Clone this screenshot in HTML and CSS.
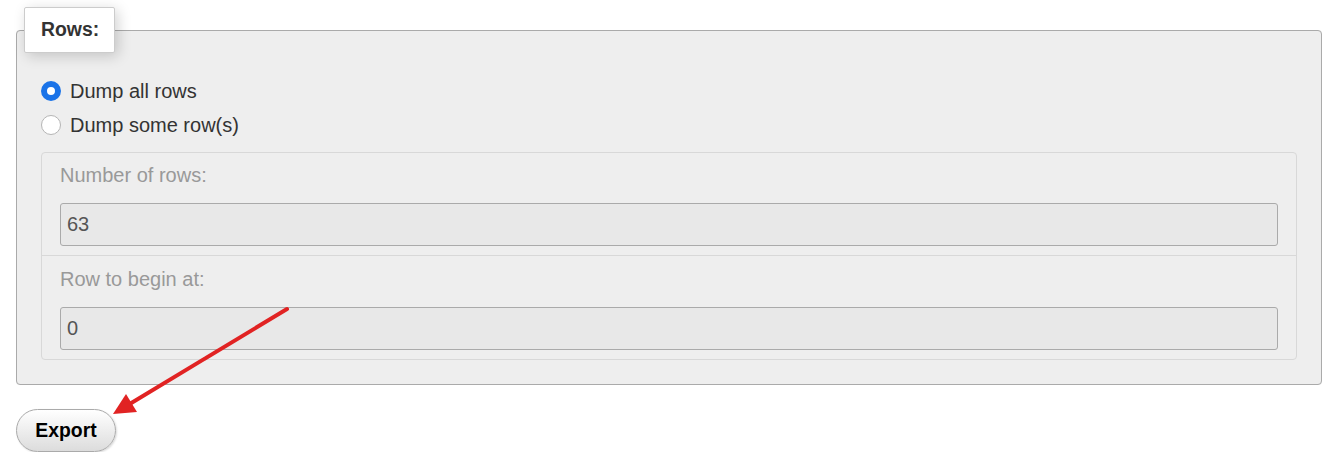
FILE: index.html
```html
<!DOCTYPE html>
<html lang="en">
<head>
    <meta charset="UTF-8">
    <title>Export rows</title>
    <link rel="stylesheet" href="styles.css">
</head>
<body>

<form class="export-form" action="#" method="post">
    <fieldset class="rows-box">
        <legend>Rows:</legend>
        <label class="radio-row">
            <input type="radio" name="allrows" value="1" checked>
            <span class="radio-mark"></span>
            Dump all rows
        </label>
        <label class="radio-row">
            <input type="radio" name="allrows" value="0">
            <span class="radio-mark"></span>
            Dump some row(s)
        </label>
        <div class="rows-options">
            <div class="option-group">
                <label for="limit-to">Number of rows:</label>
                <input type="text" id="limit-to" name="limit_to" value="63" disabled>
            </div>
            <div class="option-group">
                <label for="limit-from">Row to begin at:</label>
                <input type="text" id="limit-from" name="limit_from" value="0" disabled>
            </div>
        </div>
    </fieldset>
    <button type="submit" class="export-btn">Export</button>
</form>

<svg class="pointer-arrow" width="1333" height="463" viewBox="0 0 1333 463">
    <line x1="287" y1="309" x2="128" y2="405" stroke="#e12323" stroke-width="4" stroke-linecap="round"/>
    <polygon points="113,414 126,394 137,412" fill="#e12323"/>
</svg>

</body>
</html>
```

FILE: styles.css
```css
body {
    margin: 0;
    padding: 7px 11px 0 16px;
    font-family: "Liberation Sans", Arial, sans-serif;
    font-size: 20px;
    color: #333;
    background-color: #fff;
}
.rows-box {
    margin: 0;
    min-width: 0;
    padding: 21px 24px 24px;
    background-color: #eee;
    border: 1px solid #aaa;
    border-radius: 4px;
}
.rows-box legend {
    margin-left: -17px;
    padding: 10px 15px 11px 16px;
    font-size: 19.4px;
    font-weight: bold;
    line-height: 23px;
    color: #333;
    background-color: #fff;
    border: 1px solid #ccc;
    border-radius: 2px;
    box-shadow: 3px 3px 14px rgba(0, 0, 0, 0.18);
}
.radio-row {
    display: flex;
    align-items: center;
    height: 34px;
    gap: 9px;
}
.radio-row input {
    display: none;
}
.radio-mark {
    width: 20px;
    height: 20px;
    box-sizing: border-box;
    border-radius: 50%;
    border: 1px solid #b5b5b5;
    background-color: #fff;
}
.radio-row input:checked + .radio-mark {
    border: 6px solid #1a73e8;
}
.rows-options {
    margin-top: 10px;
    border: 1px solid #d8d8d8;
    border-radius: 4px;
}
.option-group {
    padding: 10px 18px 9px;
}
.option-group + .option-group {
    padding-top: 11px;
    border-top: 1px solid #d8d8d8;
}
.option-group label {
    display: block;
    line-height: 24px;
    margin-bottom: 16px;
    color: #999;
}
.option-group input {
    display: block;
    box-sizing: border-box;
    width: 100%;
    height: 43px;
    padding: 0 6px;
    font-family: inherit;
    font-size: 20px;
    color: #555;
    background-color: #e8e8e8;
    border: 1px solid #aaa;
    border-radius: 3px;
}
.export-btn {
    display: block;
    margin-top: 24px;
    width: 100px;
    height: 43px;
    padding: 0;
    font-family: inherit;
    font-size: 19.4px;
    font-weight: bold;
    color: #000;
    background: linear-gradient(#fff, #dcdcdc);
    border: 1px solid #aaa;
    border-radius: 22px;
    box-shadow: 1px 1px 2px rgba(0, 0, 0, 0.15);
    cursor: pointer;
}
.pointer-arrow {
    position: absolute;
    top: 0;
    left: 0;
    pointer-events: none;
}
```
